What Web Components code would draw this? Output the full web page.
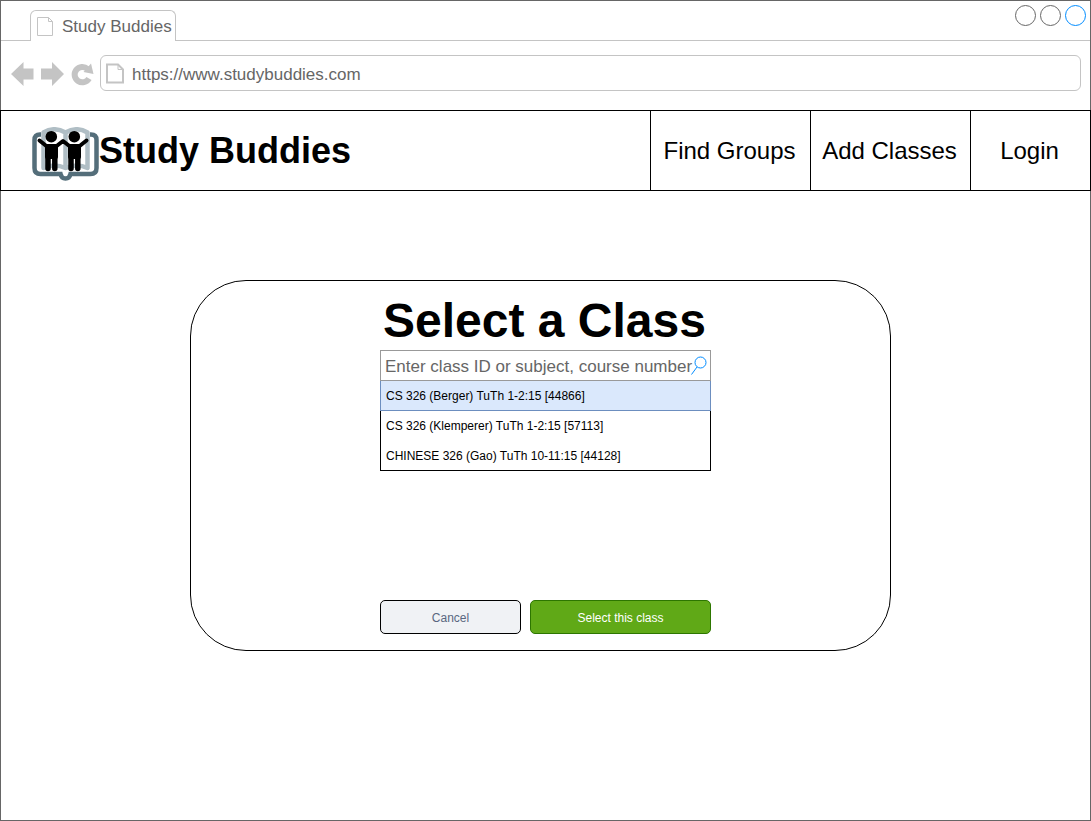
<!DOCTYPE html>
<html lang="en">
<head>
<meta charset="utf-8">
<title>Study Buddies</title>
<style>
  html, body { height: 100%; }
  body {
    margin: 0;
    background: #fff;
    color: #000;
    font-family: "Liberation Sans", Arial, Helvetica, sans-serif;
  }
</style>
</head>
<body>
<browser-window address="https://www.studybuddies.com" tab="Study Buddies">
  <site-header>
    <nav-link href="#groups">Find Groups</nav-link>
    <nav-link href="#classes">Add Classes</nav-link>
    <nav-link href="#login" class="narrow">Login</nav-link>
  </site-header>
  <class-picker heading="Select a Class">
    <class-option selected>CS 326 (Berger) TuTh 1-2:15 [44866]</class-option>
    <class-option>CS 326 (Klemperer) TuTh 1-2:15 [57113]</class-option>
    <class-option>CHINESE 326 (Gao) TuTh 10-11:15 [44128]</class-option>
  </class-picker>
</browser-window>

<script>
const attach = (el, html) => {
  const t = document.createElement('template');
  t.innerHTML = html;
  const root = el.attachShadow({ mode: 'open' });
  root.append(t.content.cloneNode(true));
  return root;
};

/* Outer window: tab strip, toolbar and page area */
customElements.define('browser-window', class extends HTMLElement {
  constructor() {
    super();
    const root = attach(this, `
      <style>
        :host {
          display: flex; flex-direction: column; box-sizing: border-box;
          min-height: 100%; border: 1px solid #666; color: #666; font-size: 17px;
        }
        button { padding: 0; border: 0; background: none; display: block; }
        svg { display: block; }
        .strip {
          display: flex; justify-content: space-between; align-items: flex-end;
          height: 40px; box-sizing: border-box; padding: 0 4px 0 29px;
          border-bottom: 1px solid #c4c4c4;
        }
        .tab {
          display: flex; align-items: center; gap: 8px; box-sizing: border-box;
          height: 31px; padding: 1px 3px 0 6px; margin-bottom: -1px; background: #fff;
          border: 1px solid #c4c4c4; border-bottom: 0; border-radius: 6px 6px 0 0;
        }
        .controls { display: flex; gap: 4px; align-self: flex-start; padding-top: 4px; }
        .bar { display: flex; align-items: center; padding: 14px 9px 19px 10px; }
        .tools { display: flex; gap: 6px; margin-right: 6px; padding-top: 2px; }
        .url {
          flex: 1; display: flex; align-items: center; gap: 8px; box-sizing: border-box;
          height: 36px; padding: 0 6px 0 5px; border: 1px solid #c4c4c4; border-radius: 6px;
        }
        input {
          flex: 1; min-width: 0; padding: 3px 0 0; border: 0; outline: 0; background: none;
          font: inherit; color: inherit; height: 24px;
        }
        .page { flex: 1; color: #000; margin: 0 -1px; }
      </style>
      <div class="strip">
        <div class="tab">
          <svg width="17" height="20" fill="none" stroke="#c4c4c4"><path d="M.5 .5H11.5L15.500 4.500V18.500H.5ZM11.500 .5V4.500H15.500"/></svg>
          <span class="title"></span>
        </div>
        <div class="controls">
          <button aria-label="Minimize"><svg width="21" height="21" fill="none" stroke="#666"><circle cx="10.500" cy="10.500" r="10"/></svg></button>
          <button aria-label="Maximize"><svg width="21" height="21" fill="none" stroke="#666"><circle cx="10.500" cy="10.500" r="10"/></svg></button>
          <button aria-label="Close"><svg width="21" height="21" fill="none" stroke="#008cff"><circle cx="10.500" cy="10.500" r="10"/></svg></button>
        </div>
      </div>
      <div class="bar">
        <div class="tools">
          <button aria-label="Back"><svg width="24" height="26" fill="#c4c4c4"><path d="M0 13L12.500 1V7.500H22.500V18.500H12.500V25Z"/></svg></button>
          <button aria-label="Forward"><svg width="24" height="26" fill="#c4c4c4"><path d="M23 13L11 1V7.500H0V18.500H11V25Z"/></svg></button>
          <button aria-label="Reload"><svg width="23" height="26"><path d="M16.500 7.900A7.700 7.700 0 1 0 18 17.500" fill="none" stroke="#c4c4c4" stroke-width="6"/><path d="M20 2.500L22.500 13L12.500 11Z" fill="#c4c4c4"/></svg></button>
        </div>
        <label class="url">
          <svg width="18" height="21" fill="none" stroke="#c4c4c4"><path stroke-width="2" d="M1 1.500H12L17 6.500V19.500H1Z"/><path d="M12 1V6.500H17"/></svg>
          <input type="text" aria-label="Address">
        </label>
      </div>
      <div class="page"><slot></slot></div>`);
    root.querySelector('.title').textContent = this.getAttribute('tab');
    root.querySelector('input').value = this.getAttribute('address');
  }
});

/* Open book with two people in front of it */
customElements.define('book-logo', class extends HTMLElement {
  constructor() {
    super();
    attach(this, `
      <style>:host { display: block; } svg { display: block; }</style>
      <svg width="67" height="55" viewBox="0 0 67 55" fill="none" aria-hidden="true">
        <path d="M9 7.500H8Q2.500 7.500 2.500 13V41Q2.500 47 8.500 47H28.500Q29.500 51.500 33.500 51.500T38.500 47H58.500Q64.500 47 64.500 41V13Q64.500 7.500 59 7.500H58" stroke="#546e7a" stroke-width="4.500"/>
        <path d="M33.500 5.500Q22 -1 11.500 5.500V41Q22 36 33.500 41Q45 36 55.500 41V5.500Q45 -1 33.500 5.500ZM33.500 5V41" stroke="#b0bec5" stroke-width="4.500" stroke-linejoin="round"/>
        <g stroke="#000" stroke-linecap="round" stroke-linejoin="round">
          <circle cx="19.300" cy="9.700" r="5.800" fill="#000" stroke="none"/>
          <circle cx="42.300" cy="9.700" r="5.800" fill="#000" stroke="none"/>
          <path d="M7.500 13.500L15 19.500H24L31 14L38 19.500H47L54.500 13.500" stroke-width="4"/>
          <path d="M15 19H24V30H15ZM38 19H47V30H38Z" fill="#000" stroke-width="4"/>
          <path d="M16 29V41.500M22.800 29V41.500M39 29V41.500M45.800 29V41.500" stroke-width="5.500"/>
        </g>
      </svg>`);
  }
});

customElements.define('nav-link', class extends HTMLElement {
  constructor() {
    super();
    const root = attach(this, `
      <style>
        :host { display: block; box-sizing: border-box; width: 160px; border-left: 1px solid #000; }
        :host(.narrow) { width: 120px; }
        a {
          display: flex; align-items: center; justify-content: center; height: 100%;
          padding-right: 2px; box-sizing: border-box;
          color: #000; font-size: 24px; text-decoration: none; white-space: nowrap;
        }
      </style>
      <a><slot></slot></a>`);
    root.querySelector('a').href = this.getAttribute('href');
  }
});

customElements.define('site-header', class extends HTMLElement {
  constructor() {
    super();
    attach(this, `
      <style>
        :host { display: block; }
        header {
          display: flex; justify-content: space-between; box-sizing: border-box;
          height: 81px; border: 1px solid #000; padding-left: 31px;
        }
        .brand { display: flex; align-items: center; font-size: 36px; font-weight: bold; }
        book-logo { padding-top: 7px; }
        nav { display: flex; }
      </style>
      <header>
        <div class="brand"><book-logo></book-logo><span>Study Buddies</span></div>
        <nav><slot></slot></nav>
      </header>`);
  }
});

customElements.define('class-option', class extends HTMLElement {
  constructor() {
    super();
    attach(this, `
      <style>
        :host {
          display: flex; align-items: center; box-sizing: border-box;
          padding: 0 5px; font-size: 12px; white-space: nowrap;
        }
        :host([selected]) {
          margin: 0 -1px; background: #dae8fc; border: 1px solid #6c8ebf; border-top: 0;
        }
      </style>
      <slot></slot>`);
  }
  connectedCallback() {
    this.setAttribute('role', 'option');
    this.setAttribute('aria-selected', this.hasAttribute('selected'));
  }
});

/* Card with the search box, its suggestions and the two actions */
customElements.define('class-picker', class extends HTMLElement {
  constructor() {
    super();
    const root = attach(this, `
      <style>
        :host { display: block; padding: 89px 200px 0 190px; }
        form {
          display: flex; flex-direction: column; align-items: center; box-sizing: border-box;
          min-height: 371px; padding: 11px 0 16px 10px;
          border: 1px solid #000; border-radius: 56px;
        }
        h1 { margin: 0; padding-right: 2px; font-size: 48px; line-height: 58px; white-space: nowrap; }
        .search, .list, .actions { width: 331px; box-sizing: border-box; }
        .search {
          display: flex; align-items: center; height: 31px; padding: 0 3px 0 4px;
          border: 1px solid #999;
        }
        input {
          flex: 1; min-width: 0; height: 24px; padding: 2px 0 0; border: 0; outline: 0;
          background: none; font: inherit; font-size: 17px;
        }
        input::placeholder { color: #666; opacity: 1; }
        .search svg { flex: none; display: block; margin-left: -4px; }
        .list {
          display: grid; grid-template-rows: 30px 30px 29px;
          border: 1px solid #000; border-top: 0;
        }
        .actions { display: grid; grid-template-columns: 141fr 181fr; gap: 9px; margin-top: auto; }
        button {
          height: 34px; padding: 2px 0 0; border: 1px solid #000; border-radius: 5px;
          background: #f0f2f5; color: #596780; font: inherit; font-size: 12px;
        }
        .primary { background: #60a917; border-color: #2d7600; color: #fff; }
      </style>
      <form>
        <h1></h1>
        <div class="search">
          <input type="text" aria-label="Class" placeholder="Enter class ID or subject, course number">
          <svg width="16" height="20" fill="none" stroke="#008cff"><circle cx="9.500" cy="6.500" r="5.500"/><path d="M6 11L.5 18.500"/></svg>
        </div>
        <div class="list" role="listbox" aria-label="Matching classes"><slot></slot></div>
        <div class="actions">
          <button type="button">Cancel</button>
          <button type="button" class="primary">Select this class</button>
        </div>
      </form>`);
    root.querySelector('h1').textContent = this.getAttribute('heading');
  }
});
</script>
</body>
</html>
